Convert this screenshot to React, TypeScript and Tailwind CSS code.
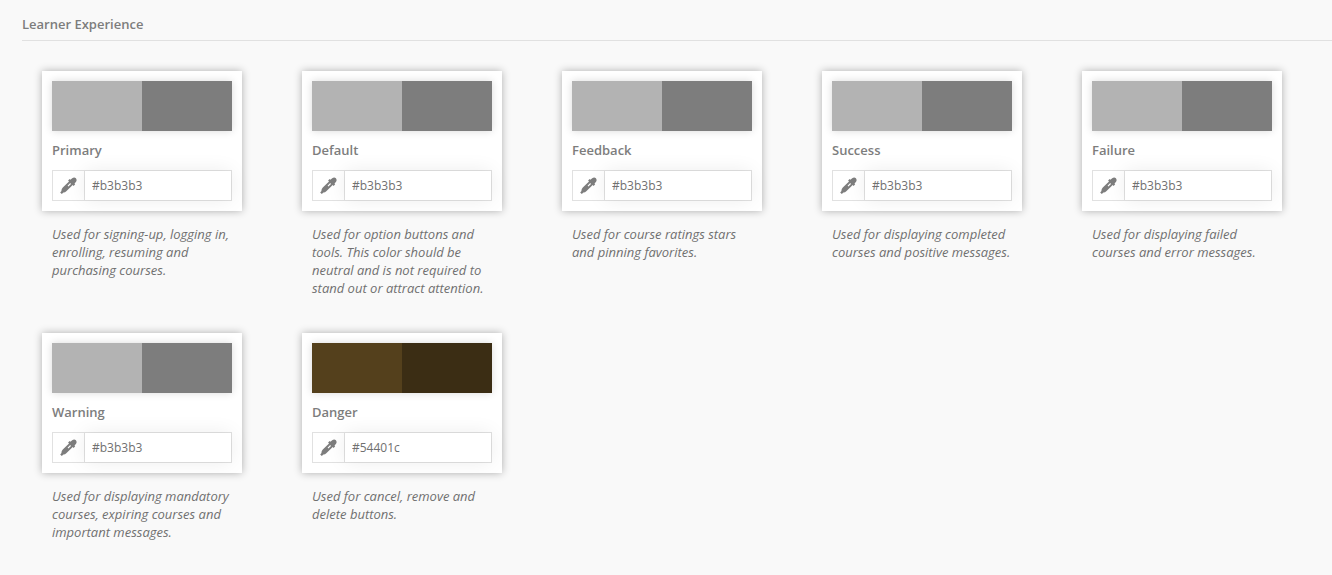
import React, { useState } from "react";

interface ThemeColor {
  name: string;
  color: string;
  shade: string;
  description: string;
}

const colors: ThemeColor[] = [
  {
    name: "Primary",
    color: "#b3b3b3",
    shade: "#7d7d7d",
    description: "Used for signing-up, logging in, enrolling, resuming and purchasing courses.",
  },
  {
    name: "Default",
    color: "#b3b3b3",
    shade: "#7d7d7d",
    description:
      "Used for option buttons and tools. This color should be neutral and is not required to stand out or attract attention.",
  },
  {
    name: "Feedback",
    color: "#b3b3b3",
    shade: "#7d7d7d",
    description: "Used for course ratings stars and pinning favorites.",
  },
  {
    name: "Success",
    color: "#b3b3b3",
    shade: "#7d7d7d",
    description: "Used for displaying completed courses and positive messages.",
  },
  {
    name: "Failure",
    color: "#b3b3b3",
    shade: "#7d7d7d",
    description: "Used for displaying failed courses and error messages.",
  },
  {
    name: "Warning",
    color: "#b3b3b3",
    shade: "#7d7d7d",
    description: "Used for displaying mandatory courses, expiring courses and important messages.",
  },
  {
    name: "Danger",
    color: "#54401c",
    shade: "#3b2d14",
    description: "Used for cancel, remove and delete buttons.",
  },
];

const Eyedropper: React.FC = () => (
  <svg viewBox="0 0 17 17" className="h-[17px] w-[17px]" fill="currentColor" aria-hidden="true">
    <path d="M10.4 2.7 12.2 1.2Q14.2-.2 15.9 1.2 17.3 3 15.9 4.9L14.5 6.5 15.2 7.3 13.6 8.9 12.7 8.1 6.3 14.3Q5 15.6 3.4 15.5L1.8 17 .2 15.6 1.5 14Q1.2 12.2 2.8 10.6L9 4.5 8.1 3.5 9.7 1.9ZM10.2 6.1 7.6 8.7 8.4 9.5 11 6.9Z" />
  </svg>
);

const ColorCard: React.FC<{ item: ThemeColor }> = ({ item }) => {
  const [value, setValue] = useState(item.color);
  const id = `color-${item.name.toLowerCase()}`;

  return (
    <div className="w-[260px] pr-10 pb-9 pl-5">
      <div className="bg-white p-2.5 shadow-[0_0_8px_rgba(0,0,0,0.3)]">
        <div className="flex h-[50px] shadow-[0_0_8px_rgba(0,0,0,0.15)]">
          <div className="flex-1" style={{ backgroundColor: item.color }} />
          <div className="flex-1" style={{ backgroundColor: item.shade }} />
        </div>
        <label htmlFor={id} className="block py-2.5 leading-[19px] font-semibold">
          {item.name}
        </label>
        <div className="flex h-[31px] border border-[#e1e1e1]">
          <button
            type="button"
            aria-label={`Pick ${item.name} color`}
            className="flex w-8 shrink-0 items-center justify-center border-r border-[#e1e1e1]"
          >
            <Eyedropper />
          </button>
          <input
            id={id}
            type="text"
            value={value}
            onChange={(e) => setValue(e.target.value)}
            className="min-w-0 flex-1 bg-white px-[7px] text-xs text-[#707070] outline-none shadow-[0_0_20px_rgba(0,0,0,0.08)]"
          />
        </div>
      </div>
      <p className="px-2.5 pt-3.5 leading-[18px] text-[#707070] italic">{item.description}</p>
    </div>
  );
};

export default function App() {
  return (
    <main className="min-h-screen bg-[#f9f9f9] pt-3.5 pl-[22px] font-['Open_Sans',sans-serif] text-[13px] text-[#7d7d7d]">
      <h2 className="border-b border-[#e1e1e1] pb-1.5 leading-5 font-semibold">Learner Experience</h2>
      <section className="flex flex-wrap pt-[30px]">
        {colors.map((item) => (
          <ColorCard key={item.name} item={item} />
        ))}
      </section>
    </main>
  );
}
